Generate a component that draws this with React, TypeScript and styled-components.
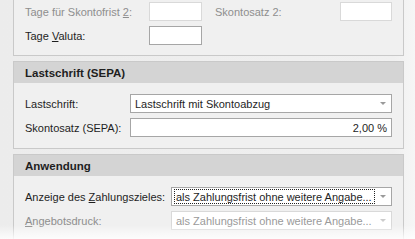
import React from 'react';
import styled, { createGlobalStyle } from 'styled-components';

const GlobalStyle = createGlobalStyle`
  html, body {
    margin: 0;
    padding: 0;
    background: #efefef;
  }
  body {
    font-family: 'Liberation Sans', Arial, sans-serif;
    font-size: 11px;
    color: #1e1e1e;
  }
`

const Page = styled.div`
  width: 415px;
  height: 239px;
  overflow: hidden;
  position: relative;
  padding: 0 11px 0 13px;
  box-sizing: border-box;
  background: linear-gradient(to right, #ececec 0, #f0f0f0 95%, #f6f6f6 100%);

  &::after {
    content: '';
    position: absolute;
    left: 0;
    right: 0;
    bottom: 0;
    height: 14px;
    background: linear-gradient(to bottom, rgba(255,255,255,0), rgba(255,255,255,0.85));
    pointer-events: none;
  }
`

const Panel = styled.section<{ $cut?: boolean }>`
  border: 1px solid #c9c9c9;
  border-top: ${p => (p.$cut ? 'none' : '1px solid #c9c9c9')};
  background: #f0f0f0;
  margin-bottom: 5px;
`

const Header = styled.div`
  height: 21px;
  background: #d4d4d4;
  display: flex;
  align-items: center;
  padding-left: 11px;
  font-weight: bold;
  font-size: 11.5px;
  color: #1e1e1e;
`

const Body = styled.div<{ $top?: number; $bottom?: number }>`
  padding: ${p => p.$top ?? 10}px 11px ${p => p.$bottom ?? 9}px 11px;
  display: flex;
  flex-direction: column;
  gap: 5px;
`

const Row = styled.div`
  display: flex;
  align-items: center;
  height: 19px;
`

const Label = styled.label<{ $w: number; $disabled?: boolean }>`
  width: ${p => p.$w}px;
  flex: none;
  color: ${p => (p.$disabled ? '#8e8e8e' : '#1e1e1e')};
  white-space: nowrap;

  & u {
    text-decoration: underline;
    text-underline-offset: 1px;
  }
`

const Input = styled.div<{ $w?: number; $disabled?: boolean; $align?: string }>`
  box-sizing: border-box;
  width: ${p => (p.$w ? `${p.$w}px` : 'auto')};
  flex: ${p => (p.$w ? 'none' : '1')};
  height: 19px;
  background: #fff;
  border: 1px solid ${p => (p.$disabled ? '#d9d9d9' : '#a6a6a6')};
  display: flex;
  align-items: center;
  justify-content: ${p => p.$align ?? 'flex-start'};
  padding: 0 4px;
  white-space: nowrap;
`

const Spacer = styled.div<{ $w: number }>`
  width: ${p => p.$w}px;
  flex: none;
`

const Select = styled.div<{ $disabled?: boolean }>`
  box-sizing: border-box;
  flex: 1;
  height: 19px;
  background: #fff;
  border: 1px solid ${p => (p.$disabled ? '#d9d9d9' : '#a6a6a6')};
  color: ${p => (p.$disabled ? '#9a9a9a' : '#1e1e1e')};
  display: flex;
  align-items: center;
  padding: 0 0 0 2px;
  white-space: nowrap;
`

const SelectText = styled.div<{ $focus?: boolean }>`
  flex: 1;
  height: 15px;
  box-sizing: border-box;
  display: flex;
  align-items: center;
  padding-left: 1px;
  border: 1px dotted ${p => (p.$focus ? '#222' : 'transparent')};
  overflow: hidden;
`

const Arrow = styled.div<{ $disabled?: boolean }>`
  width: 16px;
  flex: none;
  display: flex;
  justify-content: center;
  align-items: center;

  &::before {
    content: '';
    border-left: 3px solid transparent;
    border-right: 3px solid transparent;
    border-top: 3px solid ${p => (p.$disabled ? '#cccccc' : '#9a9a9a')};
  }
`

const App: React.FC = () => {
  return (
    <>
      <GlobalStyle />
      <Page>
        <Panel $cut>
          <Body $top={2} $bottom={10}>
            <Row>
              <Label $w={124} $disabled>Tage für Skontofrist <u>2</u>:</Label>
              <Input $w={53} $disabled />
              <Spacer $w={13} />
              <Label $w={125} $disabled>Skontosatz 2:</Label>
              <Input $w={52} $disabled />
            </Row>
            <Row>
              <Label $w={124}>Tage <u>V</u>aluta:</Label>
              <Input $w={53} />
            </Row>
          </Body>
        </Panel>

        <Panel>
          <Header>Lastschrift (SEPA)</Header>
          <Body $top={11} $bottom={11}>
            <Row>
              <Label $w={105}>Lastschrift:</Label>
              <Select>
                <SelectText>Lastschrift mit Skontoabzug</SelectText>
                <Arrow />
              </Select>
            </Row>
            <Row>
              <Label $w={105}>Skontosatz (SEPA):</Label>
              <Input $align="flex-end">2,00 %</Input>
            </Row>
          </Body>
        </Panel>

        <Panel>
          <Header>Anwendung</Header>
          <Body $top={11} $bottom={9}>
            <Row>
              <Label $w={146}>Anzeige des <u>Z</u>ahlungszieles:</Label>
              <Select>
                <SelectText $focus>als Zahlungsfrist ohne weitere Angabe...</SelectText>
                <Arrow />
              </Select>
            </Row>
            <Row>
              <Label $w={146} $disabled><u>A</u>ngebotsdruck:</Label>
              <Select $disabled>
                <SelectText>als Zahlungsfrist ohne weitere Angabe...</SelectText>
                <Arrow $disabled />
              </Select>
            </Row>
          </Body>
        </Panel>
      </Page>
    </>
  )
}

export default App
